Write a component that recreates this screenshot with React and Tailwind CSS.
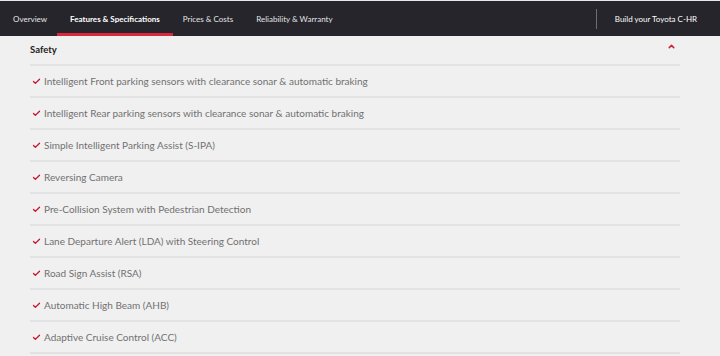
import { Check, ChevronUp } from "lucide-react";

const navItems = [
  { label: "Overview", active: false },
  { label: "Features & Specifications", active: true },
  { label: "Prices & Costs", active: false },
  { label: "Reliability & Warranty", active: false },
];

const safetyFeatures = [
  "Intelligent Front parking sensors with clearance sonar & automatic braking",
  "Intelligent Rear parking sensors with clearance sonar & automatic braking",
  "Simple Intelligent Parking Assist (S-IPA)",
  "Reversing Camera",
  "Pre-Collision System with Pedestrian Detection",
  "Lane Departure Alert (LDA) with Steering Control",
  "Road Sign Assist (RSA)",
  "Automatic High Beam (AHB)",
  "Adaptive Cruise Control (ACC)",
];

const App = () => {
  return (
    <div className="min-h-screen bg-[#f0f0f0] font-['Lato',sans-serif] overflow-hidden">
      {/* Top nav */}
      <div className="border-t border-[#e8e8e8]">
        <nav className="h-[35px] bg-[#25252b] flex items-stretch text-white text-[8px]">
          <div className="flex items-stretch pl-[13px] gap-[23px]">
            {navItems.map((item) => (
              <div
                key={item.label}
                className={`relative flex items-center ${
                  item.active ? "font-bold px-[13px] -mx-[13px]" : "text-[#e4e4e6]"
                }`}
              >
                {item.label}
                {item.active && (
                  <span className="absolute left-0 right-0 bottom-0 h-[3px] bg-[#d9283b]" />
                )}
              </div>
            ))}
          </div>
          <div className="ml-auto flex items-center">
            <span className="w-px h-[20px] bg-[#6e6e72]" />
            <span className="pl-[18px] pr-[23px]">Build your Toyota C-HR</span>
          </div>
        </nav>
      </div>

      {/* Safety accordion */}
      <div className="mx-[30px] w-[650px]">
        <div className="h-[30px] flex items-center justify-between border-b-2 border-[#e2e2e2]">
          <span className="text-[9.5px] font-bold text-[#222]">Safety</span>
          <ChevronUp className="w-[9px] h-[9px] text-[#d11f3a] mr-[4px] -mt-[7px]" strokeWidth={4} />
        </div>
        {safetyFeatures.map((feature) => (
          <div
            key={feature}
            className="h-[32px] flex items-center gap-[3px] border-b-2 border-[#e2e2e2] pl-[2px]"
          >
            <Check className="w-[9px] h-[9px] text-[#c8102e]" strokeWidth={3.5} />
            <span className="text-[10px] text-[#717171]">{feature}</span>
          </div>
        ))}
      </div>
    </div>
  );
};

export default App;
